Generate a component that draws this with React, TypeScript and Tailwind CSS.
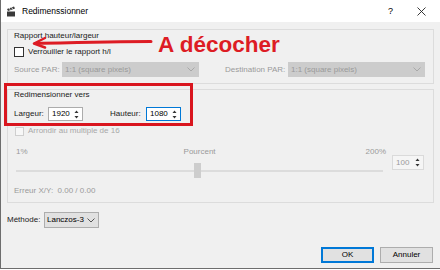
import React from "react";

const font = { fontFamily: '"Liberation Sans", Arial, sans-serif' };

const Chevron = ({ color = "#666" }: { color?: string }) => (
    <svg width="8" height="5" viewBox="0 0 8 5" className="shrink-0">
        <path d="M0.5 0.5 L4 4 L7.5 0.5" fill="none" stroke={color} strokeWidth="1" />
    </svg>
);

const SpinArrows = () => (
    <svg width="5" height="9" viewBox="0 0 5 9" className="shrink-0">
        <path d="M2.5 0.5 L4.5 3 L0.5 3 Z" fill="#333" />
        <path d="M2.5 8.5 L4.5 6 L0.5 6 Z" fill="#333" />
    </svg>
);

// Small spin box (Qt style)
const SpinBox = ({ value, focused, w }: { value: string; focused?: boolean; w: string }) => (
    <div
        className={`${w} h-[14px] bg-white border flex items-center justify-between pl-[3px] pr-[3px] ${focused ? "border-[#0078d7]" : "border-[#acacac]"}`}
    >
        <span className="text-[8px] leading-none text-black">{value}</span>
        <SpinArrows />
    </div>
);

const App = () => {
    return (
        <div className="w-[440px] h-[270px] bg-white overflow-hidden" style={font}>
            <div className="relative w-[440px] h-[269px] bg-[#f0f0f0] border-l border-b border-[#6d6d6d] flex flex-col text-[#1a1a1a]">
                {/* title bar */}
                <div className="h-[22px] bg-white flex items-center shrink-0">
                    <svg width="10" height="11" viewBox="0 0 10 11" className="ml-[5px]">
                        <path d="M1 3 L8 0.5 L9 2.5 L2 5 Z" fill="#3a3a3a" />
                        <path d="M1 5.5 H9 V10.5 H1 Z" fill="#3a3a3a" />
                        <path d="M3 1.8 L4.2 3.8 M5.5 1.2 L6.6 3" stroke="#fff" strokeWidth="0.8" />
                    </svg>
                    <span className="ml-[6px] text-[8.5px] leading-none text-black">Redimenssionner</span>
                    <span className="ml-auto text-[9px] leading-none text-black">?</span>
                    <svg width="9" height="9" viewBox="0 0 9 9" className="ml-[24px] mr-[14px]">
                        <path d="M0.5 0.5 L8.5 8.5 M8.5 0.5 L0.5 8.5" stroke="#222" strokeWidth="0.9" />
                    </svg>
                </div>

                <div className="flex flex-col px-[6px]">
                    {/* group 1 */}
                    <div className="mt-[7px] h-[55px] border border-[#dcdcdc] flex flex-col px-[6px]">
                        <div className="mt-[1px] h-[9px] flex items-center text-[8px] leading-none">Rapport hauteur/largeur</div>
                        <div className="mt-[7px] h-[10px] flex items-center">
                            <div className="w-[10px] h-[10px] bg-white border border-[#333]" />
                            <span className="ml-[4px] text-[8px] leading-none">Verrouiller le rapport h/l</span>
                        </div>
                        <div className="mt-[5px] h-[15px] flex items-center text-[8px] leading-none text-[#9a9a9a]">
                            <span className="w-[48px]">Source PAR:</span>
                            <div className="w-[137px] h-[15px] bg-[#cccccc] flex items-center justify-between pl-[3px] pr-[4px]">
                                <span>1:1 (square pixels)</span>
                                <Chevron color="#a8a8a8" />
                            </div>
                            <span className="ml-[26px] w-[63px]">Destination PAR:</span>
                            <div className="w-[137px] h-[15px] bg-[#cccccc] flex items-center justify-between pl-[3px] pr-[4px]">
                                <span>1:1 (square pixels)</span>
                                <Chevron color="#a8a8a8" />
                            </div>
                        </div>
                    </div>

                    {/* group 2 */}
                    <div className="mt-[5px] h-[114px] border border-[#dcdcdc] flex flex-col px-[6px]">
                        <div className="mt-[1px] h-[8px] flex items-center text-[8px] leading-none">Redimensionner vers</div>
                        <div className="mt-[8px] h-[14px] flex items-center text-[8px] leading-none">
                            <span className="w-[34px]">Largeur:</span>
                            <SpinBox value="1920" w="w-[35px]" />
                            <span className="ml-[27px] w-[36px]">Hauteur:</span>
                            <SpinBox value="1080" w="w-[35px]" focused />
                        </div>
                        <div className="mt-[5px] h-[10px] flex items-center">
                            <div className="w-[9px] h-[9px] bg-[#f7f7f7] border border-[#cfcfcf] ml-[1px]" />
                            <span className="ml-[4px] text-[8px] leading-none text-[#a8a8a8]">Arrondir au multiple de 16</span>
                        </div>
                        <div className="mt-[11px] flex items-start">
                            <div className="w-[372px] flex flex-col">
                                <div className="h-[10px] flex items-center text-[8px] leading-none text-[#9a9a9a] pl-[2px]">
                                    <span>1%</span>
                                    <span className="ml-[156px]">Pourcent</span>
                                    <span className="ml-auto">200%</span>
                                </div>
                                <div className="mt-[6px] h-[15px] relative flex items-center pl-[2px] pr-[3px]">
                                    <div className="w-full h-[2px] bg-[#dcdcdc]" />
                                    <div className="absolute left-[180px] top-0 w-[7px] h-[15px] bg-[#cdcdcd]" />
                                </div>
                            </div>
                            <div className="ml-[6px] mt-[8px]">
                                <div className="w-[32px] h-[15px] bg-[#f5f5f5] border border-[#dadada] flex items-center justify-between pl-[3px] pr-[3px]">
                                    <span className="text-[8px] leading-none text-[#9a9a9a]">100</span>
                                    <SpinArrows />
                                </div>
                            </div>
                        </div>
                        <div className="mt-[8px] h-[10px] flex items-center text-[8px] leading-none text-[#9a9a9a]">
                            Erreur X/Y:&nbsp; 0.00 / 0.00
                        </div>
                    </div>

                    {/* method */}
                    <div className="mt-[9px] h-[16px] flex items-center text-[8px] leading-none">
                        <span className="w-[37px]">Méthode:</span>
                        <div className="w-[55px] h-[16px] bg-[#e1e1e1] border border-[#adadad] flex items-center justify-between pl-[2px] pr-[3px]">
                            <span className="text-black">Lanczos-3</span>
                            <Chevron color="#555" />
                        </div>
                    </div>

                    {/* buttons */}
                    <div className="mt-[19px] flex justify-end gap-[6px] pr-[1px]">
                        <div className="w-[53px] h-[16px] bg-[#e1e1e1] border-2 border-[#0078d7] flex items-center justify-center text-[8px] leading-none text-black">OK</div>
                        <div className="w-[53px] h-[16px] bg-[#e1e1e1] border border-[#adadad] flex items-center justify-center text-[8px] leading-none text-black">Annuler</div>
                    </div>
                </div>

                {/* red annotations */}
                <svg width="130" height="14" viewBox="0 0 130 14" className="absolute left-[26px] top-[35px]">
                    <path d="M124 6.5 C90 6.5 50 7.5 8 8.5" fill="none" stroke="#dd1c24" strokeWidth="3" strokeLinecap="round" />
                    <path d="M18 3 L7 8.5 L18 12.5" fill="none" stroke="#dd1c24" strokeWidth="2.5" strokeLinecap="round" strokeLinejoin="round" />
                </svg>
                <div className="absolute left-[157px] top-[34px] text-[22.5px] leading-none font-bold text-[#dd1c24]">A décocher</div>
                <div className="absolute left-[3px] top-[83px] w-[189px] h-[43px] border-[3px] border-[#d9151e]" />
            </div>
        </div>
    );
};

export default App;
